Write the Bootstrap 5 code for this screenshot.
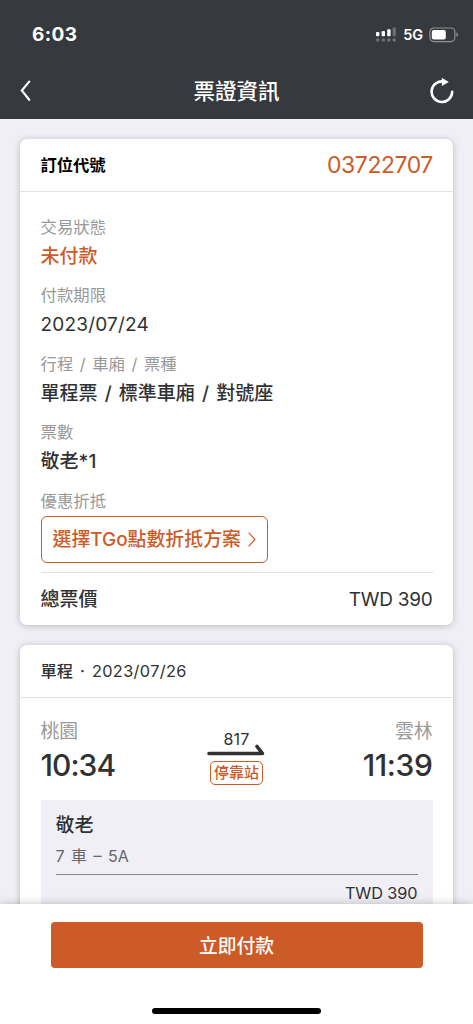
<!DOCTYPE html>
<html lang="zh-Hant">
<head>
<meta charset="utf-8">
<meta name="viewport" content="width=device-width, initial-scale=1">
<title>票證資訊</title>
<link href="https://cdn.jsdelivr.net/npm/bootstrap@5.3.0/dist/css/bootstrap.min.css" rel="stylesheet">
<style>
:root{--brand:#cd5b28;--ink:#303133;--muted:#999;--canvas:#f0eff5}
html,body{height:100%}
body{font-family:Inter,"Noto Sans CJK TC",sans-serif;font-size:19px;line-height:32px;color:var(--ink);background:var(--canvas)}
.text-brand{color:var(--brand)}
.topbar{height:119px;background:#36393e;color:#fff}
.statusbar{height:63px;padding:6px 14px 0 32px}
.clock{font-size:19px;font-weight:700;letter-spacing:.4px;padding-top:1px}
.network{font-size:14.5px;font-weight:600;letter-spacing:-.1px;margin:0 6px 0 6px}
.titlebar{height:56px;padding:0 19px}
.page-title{font-size:21.5px;font-weight:500}
.content{padding:20px 20px 0;gap:20px}
.ticket{border:0;border-radius:7px;box-shadow:0 1px 7px rgba(0,0,0,.23);flex-shrink:0}
.ticket-head{height:53px;padding:0 20.5px;border-bottom:1px solid #e3e3e3}
.ticket-main{padding:0 20.5px}
.booking-label{font-size:16.3px;font-weight:700;color:#000}
.booking-code{font-size:23px;letter-spacing:-.45px;margin-right:-.45px}
.fields{padding-top:21.5px}
.field-label{font-size:16.4px;line-height:26px;color:var(--muted);word-spacing:1.9px}
.field-value{font-weight:500;line-height:34px;margin-bottom:8.6px;word-spacing:2.1px}
.field-date{font-weight:400;letter-spacing:.2px}
.btn-points{height:47px;padding:2px 11px 0;margin-top:2px;border:1.5px solid var(--brand);border-radius:6px;color:var(--brand);font-size:18.9px;font-weight:500;line-height:1}
.total{height:53px;padding-top:2px;margin-top:9px;border-top:1px solid #e3e3e3}
.total-price{letter-spacing:-.25px}
.trip-head{font-size:16.3px;font-weight:500;word-spacing:2.6px}
.trip-date{font-weight:400;letter-spacing:.38px}
.trip{height:102px;padding-top:18px}
.station{color:var(--muted);line-height:32px;font-size:18.8px}
.time{font-size:30px;font-weight:500;line-height:35px;letter-spacing:-.4px}
.time-from{letter-spacing:-.95px}
.train{width:60px;padding-top:11px;font-size:16px;line-height:24px;margin-right:5px}
.train-no{letter-spacing:.2px}
.train-arrow{margin-top:-8px}
.stops{font-size:15px;line-height:22px;padding:0 3px;border:1.3px solid var(--brand);border-radius:5px;color:var(--brand);font-weight:500;margin-top:5px;white-space:nowrap}
.seat{background:#f0eff5;padding:9px 15px 30px;height:170px}
.seat-name{font-weight:500;padding-top:1px;line-height:31px}
.seat-place{font-size:16px;color:#666;height:34px;line-height:30px;word-spacing:2px;border-bottom:1px solid #888}
.seat-price{font-size:16.3px;line-height:37px;letter-spacing:-.1px}
.paybar{height:120px;padding:18px 50.5px 10px;background:#fff;box-shadow:0 0 9px rgba(0,0,0,.23);z-index:1}
.btn-pay{height:46px;border:0;border-radius:4px;background:var(--brand);color:#fff;font-size:18.8px;font-weight:500}
.home-indicator{width:169px;height:6px;border-radius:3px;background:#000}
</style>
</head>
<body class="d-flex flex-column vh-100 overflow-hidden">
<header class="topbar flex-shrink-0">
  <div class="statusbar d-flex align-items-center">
    <span class="clock">6:03</span>
    <svg class="ms-auto" width="22" height="16" viewBox="0 0 22 16" fill="#fff">
      <rect x="1" y="5" width="3.4" height="4.2" rx="1"/><rect x="6.6" y="4" width="3.4" height="5.2" rx="1"/><rect x="12.2" y="2.3" width="3.4" height="6.9" rx="1"/>
      <rect x="17.6" y=".5" width="3.2" height="8.7" rx="1" opacity=".28"/>
      <g opacity=".28"><circle cx="2.7" cy="13" r="1.8"/><circle cx="8.3" cy="13" r="1.8"/><circle cx="13.9" cy="13" r="1.8"/><circle cx="19.2" cy="13" r="1.8"/></g>
    </svg>
    <span class="network">5G</span>
    <svg width="30" height="16" viewBox="0 0 30 16"><rect x=".9" y="1" width="25" height="13.6" rx="4" fill="none" stroke="#fff" stroke-opacity=".45" stroke-width="1.2"/><rect x="2.8" y="3" width="14" height="9.6" rx="2" fill="#fff"/><path d="M27.5 5.6c2 .7 2 3.7 0 4.4z" fill="#fff" opacity=".45"/></svg>
  </div>
  <nav class="titlebar d-flex align-items-center justify-content-between">
    <svg width="24" height="24" viewBox="0 0 24 24" fill="none" stroke="#fff" stroke-width="2.1"><path d="M10.8 1.8 2.8 11.5l8 10"/></svg>
    <span class="page-title">票證資訊</span>
    <svg width="24" height="28" viewBox="0 0 24 28"><path d="M14 4.6A10.3 10.3 0 1 0 22.2 14.7" fill="none" stroke="#fff" stroke-width="2.6" stroke-linecap="round"/><path d="M11.8.7 18.8 5l-7 4z" fill="#fff"/></svg>
  </nav>
</header>
<main class="content d-flex flex-column flex-grow-1 overflow-hidden">
  <section class="card ticket">
    <div class="ticket-head d-flex align-items-center justify-content-between">
      <span class="booking-label">訂位代號</span><span class="booking-code text-brand">03722707</span>
    </div>
    <div class="ticket-main fields">
      <div class="field-label">交易狀態</div><div class="field-value text-brand">未付款</div>
      <div class="field-label">付款期限</div><div class="field-value field-date">2023/07/24</div>
      <div class="field-label">行程 / 車廂 / 票種</div><div class="field-value">單程票 / 標準車廂 / 對號座</div>
      <div class="field-label">票數</div><div class="field-value">敬老*1</div>
      <div class="field-label">優惠折抵</div>
      <button class="btn btn-points d-flex align-items-center" type="button">選擇TGo點數折抵方案
        <svg style="margin-left:7px" width="8" height="16" viewBox="0 0 8 16" fill="none" stroke="currentColor" stroke-width="1.2"><path d="m.7 .7 6.3 6.8-6.3 6.8"/></svg></button>
      <div class="total d-flex align-items-center justify-content-between"><span class="fw-medium">總票價</span><span class="total-price">TWD 390</span></div>
    </div>
  </section>
  <section class="card ticket">
    <div class="ticket-head trip-head d-flex align-items-center"><span>單程 · <span class="trip-date">2023/07/26</span></span></div>
    <div class="ticket-main">
      <div class="trip d-flex justify-content-between">
        <div><div class="station">桃園</div><div class="time time-from">10:34</div></div>
        <div class="train d-flex flex-column align-items-center"><span class="train-no">817</span>
          <svg class="train-arrow" width="58" height="13" viewBox="0 0 58 13" fill="none" stroke="#303133" stroke-width="3.6" stroke-linecap="round" stroke-linejoin="round"><path d="M2 10.5H55.5L50 3.5"/></svg>
          <span class="stops">停靠站</span></div>
        <div class="text-end"><div class="station">雲林</div><div class="time">11:39</div></div>
      </div>
      <div class="seat">
        <div class="seat-name">敬老</div>
        <div class="seat-place">7 車 – 5A</div>
        <div class="seat-price text-end">TWD 390</div>
      </div>
    </div>
  </section>
</main>
<footer class="paybar d-flex flex-column align-items-center flex-shrink-0 position-relative">
  <button class="btn btn-pay w-100 p-0 pt-1" type="button">立即付款</button>
  <div class="home-indicator mt-auto"></div>
</footer>
<script src="https://cdn.jsdelivr.net/npm/bootstrap@5.3.0/dist/js/bootstrap.bundle.min.js"></script>
</body>
</html>
